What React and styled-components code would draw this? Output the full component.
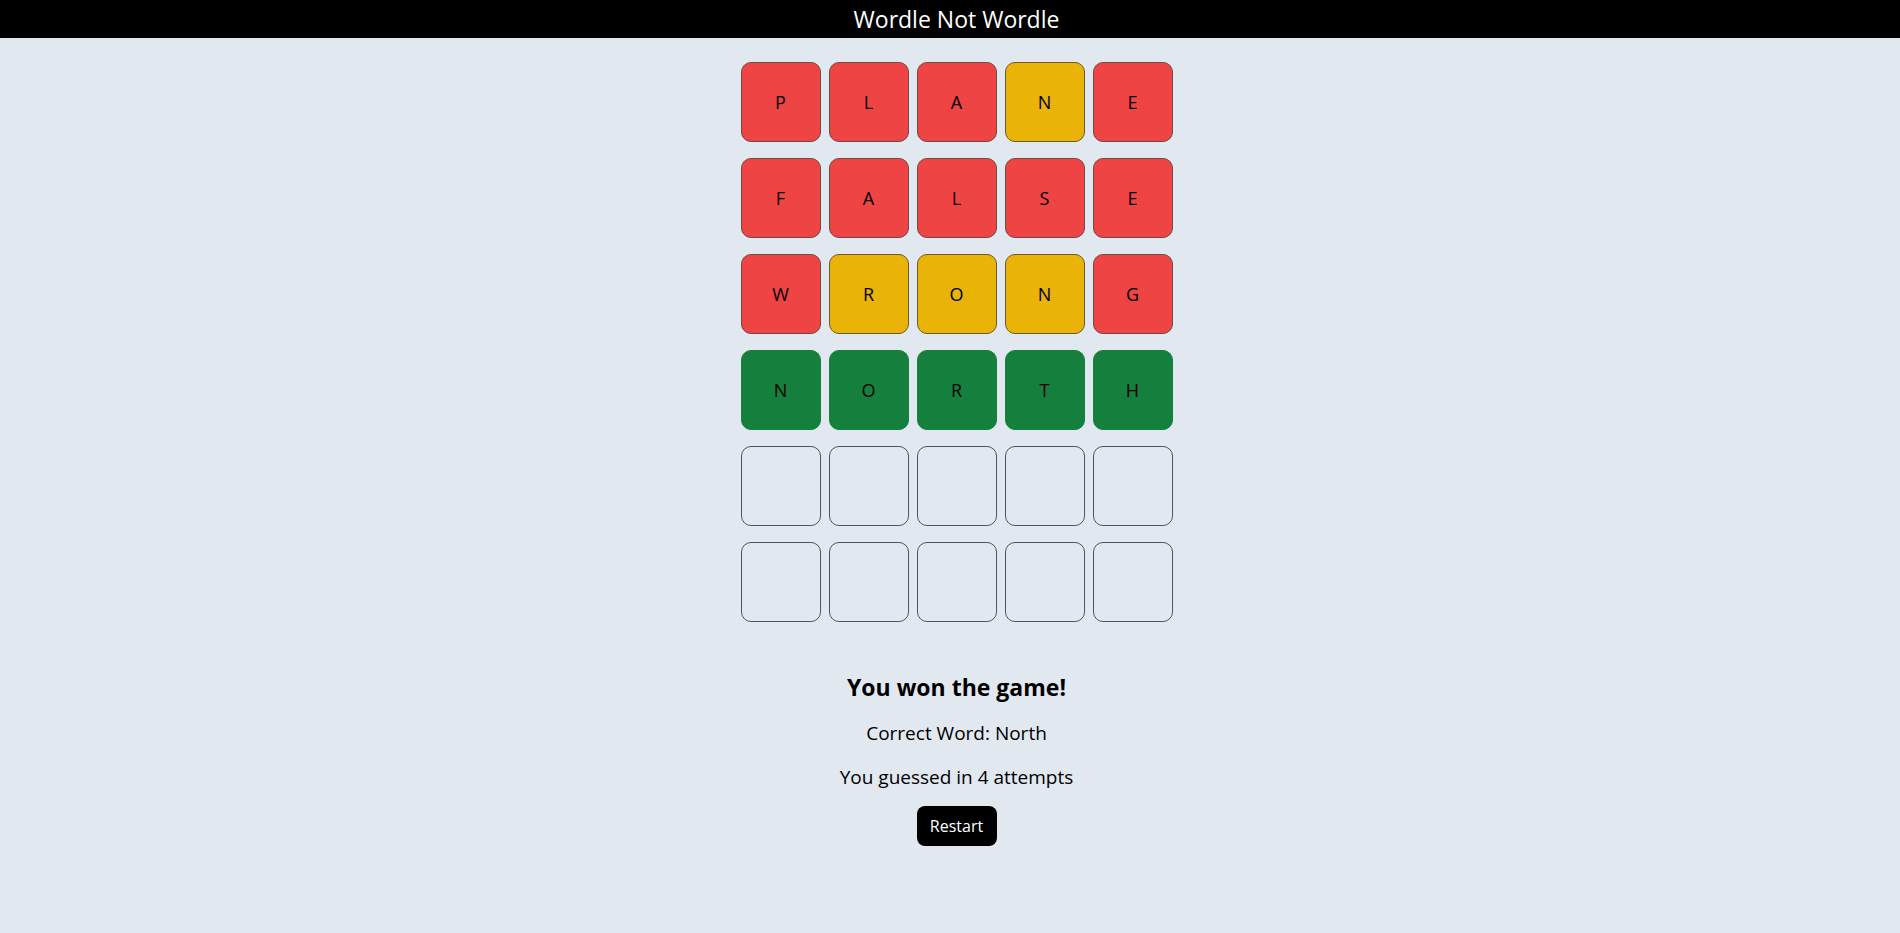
import React from "react";
import styled, { createGlobalStyle } from "styled-components";

const GlobalStyle = createGlobalStyle`
  * {
    box-sizing: border-box;
  }
  body {
    margin: 0;
    background-color: #e2e8f0;
    font-family: "Open Sans", "Noto Sans", sans-serif;
    color: #000;
  }
`;

const guesses = [
  { word: "PLANE", states: ["miss", "miss", "miss", "near", "miss"] },
  { word: "FALSE", states: ["miss", "miss", "miss", "miss", "miss"] },
  { word: "WRONG", states: ["miss", "near", "near", "near", "miss"] },
  { word: "NORTH", states: ["hit", "hit", "hit", "hit", "hit"] },
  { word: "", states: [] },
  { word: "", states: [] },
];

const tileColors = {
  miss: "#ef4444",
  near: "#eab308",
  hit: "#15803d",
};

const tileBorders = {
  miss: "#6b4a4a",
  near: "#6b5a2a",
  hit: "#15803d",
};

const App = () => {
  return (
    <>
      <GlobalStyle />
      <Header>
        <h1>Wordle Not Wordle</h1>
      </Header>
      <Main>
        <Board>
          {guesses.map((guess, row) =>
            [0, 1, 2, 3, 4].map((col) => (
              <Tile key={`${row}-${col}`} $state={guess.states[col]}>
                {guess.word[col] || ""}
              </Tile>
            ))
          )}
        </Board>
        <Result>
          <h2>You won the game!</h2>
          <p>Correct Word: North</p>
          <p>You guessed in 4 attempts</p>
          <RestartButton>Restart</RestartButton>
        </Result>
      </Main>
    </>
  );
};

const Header = styled.header`
  height: 38px;
  background-color: #000;
  display: flex;
  justify-content: center;
  align-items: center;
  padding-left: 13px;
  h1 {
    margin: 0;
    font-size: 23px;
    font-weight: 400;
    line-height: 38px;
    color: #fff;
  }
`;

const Main = styled.main`
  display: flex;
  flex-direction: column;
  align-items: center;
  padding: 24px 0 0 13px;
`;

const Board = styled.div`
  display: grid;
  grid-template-columns: repeat(5, 80px);
  grid-auto-rows: 80px;
  column-gap: 8px;
  row-gap: 16px;
`;

const Tile = styled.div`
  display: flex;
  align-items: center;
  justify-content: center;
  border: 1px solid ${({ $state }) => tileBorders[$state] || "#4b5563"};
  border-radius: 10px;
  background-color: ${({ $state }) => tileColors[$state] || "transparent"};
  font-size: 18px;
  color: #000;
`;

const Result = styled.div`
  margin-top: 49px;
  display: flex;
  flex-direction: column;
  align-items: center;
  gap: 16px;
  h2 {
    margin: 0;
    font-size: 23px;
    font-weight: 700;
    line-height: 32px;
  }
  p {
    margin: 0;
    font-size: 19px;
    line-height: 28px;
  }
`;

const RestartButton = styled.button`
  width: 80px;
  height: 40px;
  margin-top: -1px;
  border: none;
  border-radius: 8px;
  background-color: #000;
  color: #fff;
  font-family: inherit;
  font-size: 16px;
  cursor: pointer;
`;

export default App;
